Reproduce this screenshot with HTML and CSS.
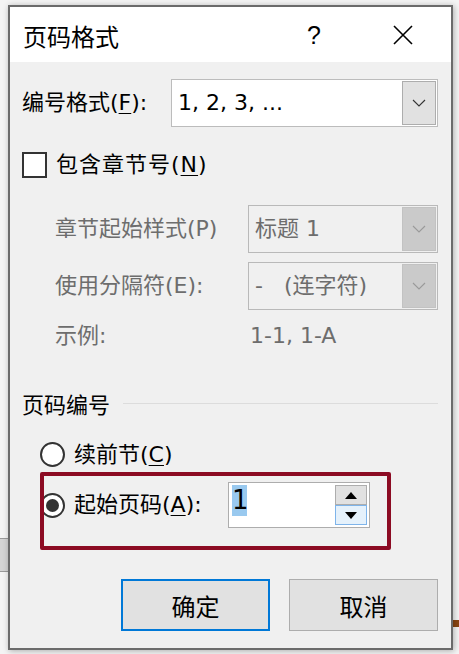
FILE: index.html
```html
<!DOCTYPE html>
<html lang="zh-CN">
<head>
<meta charset="utf-8">
<title>页码格式</title>
<link rel="stylesheet" href="styles.css">
</head>
<body>
<div class="stage">
  <div class="side-box"></div>
  <div class="side-bar"></div>
  <div class="dialog">
    <div class="titlebar">
      <span class="title">页码格式</span>
      <span class="help">?</span>
      <span class="close"><svg width="20" height="20" viewBox="0 0 20 20"><path d="M1 1 L19 19 M19 1 L1 19" stroke="#000" stroke-width="1.6" fill="none"/></svg></span>
    </div>
    <div class="content">
      <div class="row row-format">
        <span class="label">编号格式(<u>F</u>):</span>
        <div class="select select-wide">
          <span class="select-text">1, 2, 3, ...</span>
          <span class="drop"><svg width="14" height="8" viewBox="0 0 14 8"><path d="M1 1 L7 7 L13 1" stroke="#333" stroke-width="1.1" fill="none"/></svg></span>
        </div>
      </div>
      <div class="row row-check">
        <span class="checkbox"></span>
        <span class="label wide">包含章节号(<u>N</u>)</span>
      </div>
      <div class="row row-sub row-first">
        <span class="label dim">章节起始样式(P)</span>
        <div class="select select-dis">
          <span class="select-text dim">标题 1</span>
          <span class="drop drop-dis"><svg width="14" height="8" viewBox="0 0 14 8"><path d="M1 1 L7 7 L13 1" stroke="#9a9a9a" stroke-width="1.1" fill="none"/></svg></span>
        </div>
      </div>
      <div class="row row-sub row-second">
        <span class="label dim">使用分隔符(E):</span>
        <div class="select select-dis">
          <span class="select-text dim">-&nbsp;&nbsp;&nbsp;(连字符)</span>
          <span class="drop drop-dis"><svg width="14" height="8" viewBox="0 0 14 8"><path d="M1 1 L7 7 L13 1" stroke="#9a9a9a" stroke-width="1.1" fill="none"/></svg></span>
        </div>
      </div>
      <div class="row row-example">
        <span class="label dim ex-label">示例:</span>
        <span class="label dim">1-1, 1-A</span>
      </div>
      <div class="row row-section">
        <span class="label">页码编号</span>
        <span class="rule"></span>
      </div>
      <div class="row row-radio1">
        <span class="radio"></span>
        <span class="label">续前节(<u>C</u>)</span>
      </div>
      <div class="row row-radio2">
        <span class="radio checked"></span>
        <span class="label">起始页码(<u>A</u>):</span>
        <div class="spin">
          <span class="spin-text"><span class="sel">1</span></span>
          <span class="spin-btns">
            <span class="spin-up"><svg width="12" height="7" viewBox="0 0 12 7"><path d="M0 7 L6 0 L12 7 Z" fill="#000"/></svg></span>
            <span class="spin-down"><svg width="12" height="7" viewBox="0 0 12 7"><path d="M0 0 L12 0 L6 7 Z" fill="#000"/></svg></span>
          </span>
        </div>
      </div>
      <div class="row row-buttons">
        <button class="btn btn-default">确定</button>
        <button class="btn">取消</button>
      </div>
      <div class="annot"></div>
    </div>
  </div>
</div>
</body>
</html>
```

FILE: styles.css
```css
* { box-sizing: border-box; }
html, body {
  margin: 0;
  padding: 0;
}
body {
  width: 459px;
  height: 654px;
  overflow: hidden;
  background: #f4f4f4;
  font-family: "DejaVu Sans", "Noto Sans CJK SC", sans-serif;
  color: #000;
}
.stage {
  position: relative;
  width: 459px;
  height: 654px;
  padding: 5px 0 0 8px;
}
.side-box {
  position: absolute;
  left: 0;
  top: 538px;
  width: 8px;
  height: 34px;
  background: #d4d4d4;
  border-top: 1px solid #9a9a9a;
  border-bottom: 1px solid #9a9a9a;
}
.side-bar {
  position: absolute;
  left: 453px;
  top: 620px;
  width: 6px;
  height: 7px;
  background: #8a4512;
}
.dialog {
  position: relative;
  width: 445px;
  height: 645px;
  border: 2px solid #6b6b6b;
  background: #f0f0f0;
  box-shadow: 1px 1px 6px rgba(0, 0, 0, 0.3);
  display: flex;
  flex-direction: column;
}
.titlebar {
  height: 55px;
  background: #fff;
  display: flex;
  align-items: center;
  flex-shrink: 0;
}
.title {
  font-family: "Noto Sans CJK SC", sans-serif;
  font-size: 24px;
  margin-left: 13px;
  margin-top: 2px;
  width: 284px;
}
.help {
  font-family: "Liberation Sans", sans-serif;
  font-size: 25px;
  width: 86px;
  margin-top: 1px;
}
.close {
  display: flex;
  margin-top: 1px;
}
.content {
  position: relative;
  flex: 1;
  padding: 0 13px 0 12px;
}
.row {
  display: flex;
  align-items: center;
}
.label {
  font-size: 22px;
  white-space: nowrap;
  line-height: 30px;
}
.label.wide { letter-spacing: 1px; }
.dim { color: #6d6d6d; }
u { text-decoration-thickness: 1px; text-underline-offset: 3px; }

.row-format {
  margin-top: 17px;
  height: 48px;
}
.row-format .label { width: 149px; }
.select {
  height: 48px;
  display: flex;
  align-items: center;
  padding: 1px;
  border: 1px solid #b4b4b4;
}
.select-wide {
  width: 267px;
  background: #fff;
  border-color: #bcbcbc;
}
.select-dis {
  width: 190px;
  background: #f0f0f0;
  border-color: #b9b9b9;
}
.select-text {
  flex: 1;
  font-size: 22px;
  padding-left: 5px;
  line-height: 30px;
  white-space: nowrap;
}
.select-dis .select-text { padding-left: 5px; }
.drop {
  width: 34px;
  height: 44px;
  background: #e1e1e1;
  border: 1px solid #adadad;
  display: flex;
  align-items: center;
  justify-content: center;
}
.drop-dis {
  background: #cacaca;
  border-color: #c2c2c2;
}

.row-check {
  margin-top: 25px;
  height: 26px;
}
.checkbox {
  width: 25px;
  height: 26px;
  border: 2px solid #333;
  background: #fff;
  margin-right: 9px;
}

.row-sub {
  height: 48px;
  padding-left: 33px;
}
.row-sub .label { width: 193px; }
.row-first { margin-top: 27px; }
.row-second { margin-top: 9px; }

.row-example {
  margin-top: 11px;
  height: 30px;
  padding-left: 33px;
}
.ex-label { width: 195px; }

.row-section {
  margin-top: 40px;
  height: 30px;
  align-items: flex-start;
}
.rule {
  flex: 1;
  height: 1px;
  background: #dcdcdc;
  margin-top: 12px;
  margin-left: 13px;
}

.radio {
  width: 25px;
  height: 25px;
  border: 2px solid #333;
  border-radius: 50%;
  background: #fff;
  margin-left: 18px;
  margin-right: 9px;
  display: flex;
  align-items: center;
  justify-content: center;
  flex-shrink: 0;
}
.radio.checked::after {
  content: "";
  width: 13px;
  height: 13px;
  border-radius: 50%;
  background: #333;
}
.row-radio1 {
  margin-top: 21px;
  height: 25px;
}
.row-radio2 {
  margin-top: 15px;
  height: 46px;
}
.row-radio2 .label { width: 154px; }
.spin {
  width: 142px;
  height: 46px;
  border: 1px solid #adadad;
  background: #fff;
  display: flex;
  padding: 2px;
}
.spin-text {
  flex: 1;
  font-size: 26px;
  line-height: 31px;
  padding-left: 1px;
}
.sel {
  display: inline-block;
  background: #99c9ef;
  color: #000;
  width: 15px;
  height: 31px;
  line-height: 31px;
  text-align: center;
}
.spin-btns {
  width: 32px;
  display: flex;
  flex-direction: column;
}
.spin-up, .spin-down {
  flex: 1;
  display: flex;
  align-items: center;
  justify-content: center;
}
.spin-up {
  background: #e1e1e1;
  border: 1px solid #adadad;
}
.spin-down {
  background: #e5f1fb;
  border: 1px solid #7eb4ea;
}

.row-buttons {
  margin-top: 51px;
  justify-content: flex-end;
  gap: 19px;
}
.btn {
  width: 149px;
  height: 52px;
  background: #e1e1e1;
  border: 1px solid #adadad;
  font-family: "Noto Sans CJK SC", sans-serif;
  font-size: 24px;
  color: #000;
  padding: 0;
}
.btn-default {
  border: 2px solid #0078d7;
}

.annot {
  position: absolute;
  left: 30px;
  top: 410px;
  width: 351px;
  height: 78px;
  border: 4px solid #8c0b23;
  border-radius: 2px;
  pointer-events: none;
}
```
